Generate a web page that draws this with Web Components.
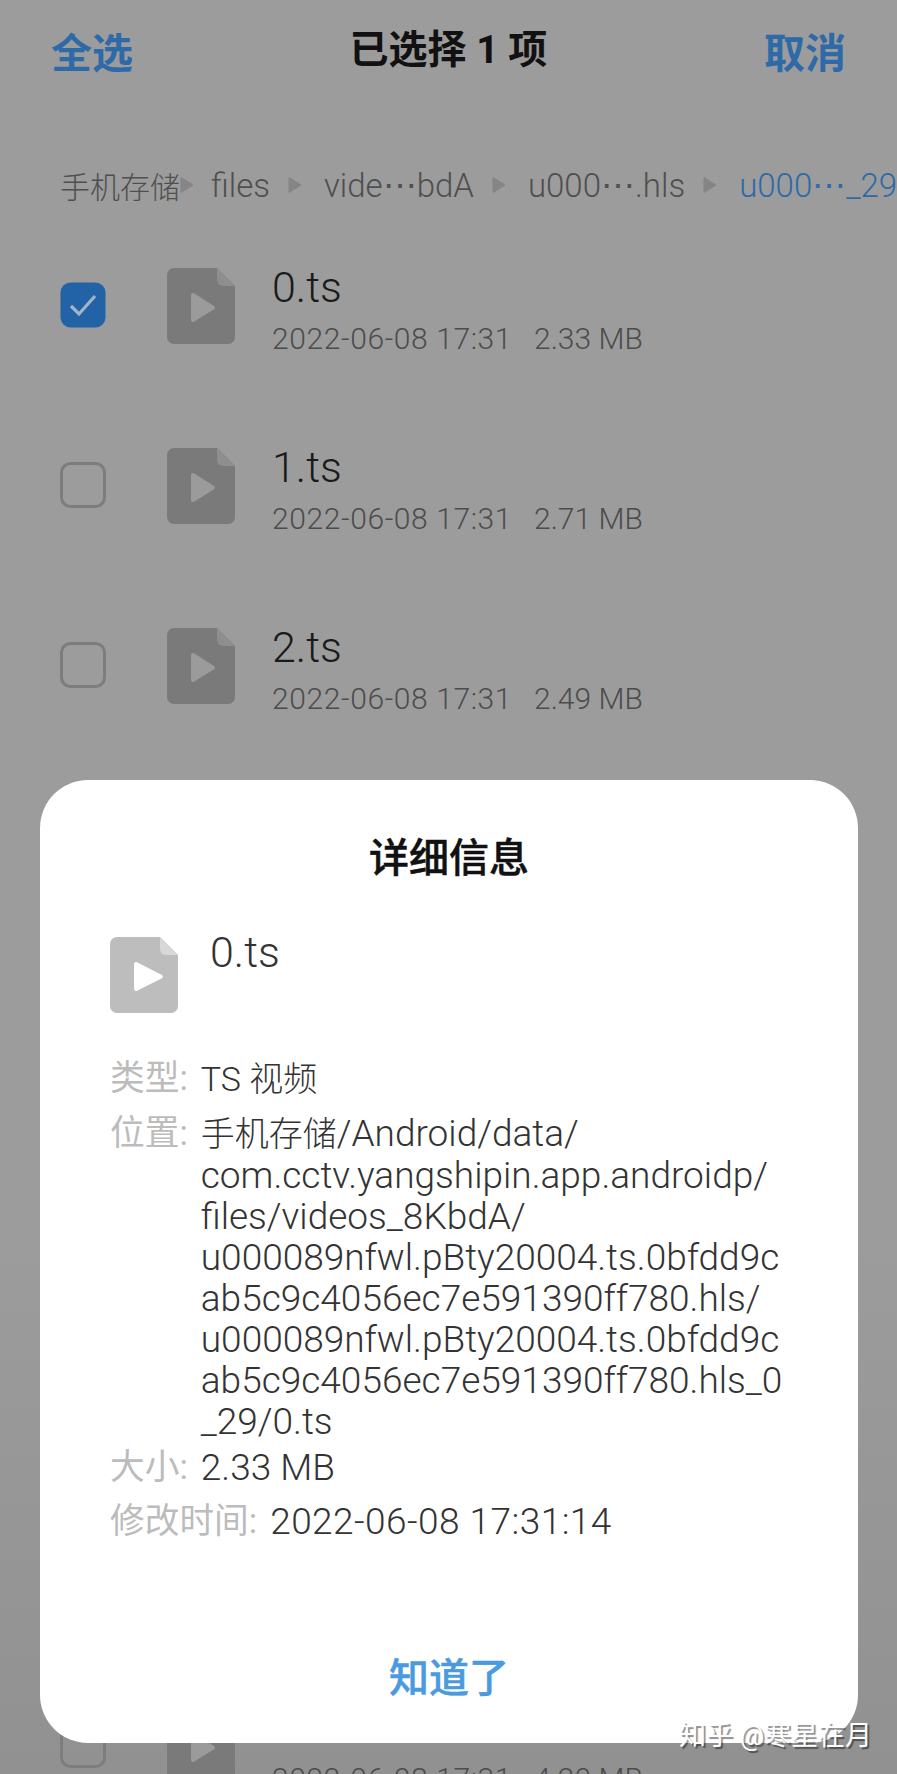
<!DOCTYPE html>
<html>
<head>
<meta charset="utf-8">
<style>
  html, body { margin: 0; padding: 0; background: #9b9b9b; }
  body { width: 897px; height: 1774px; overflow: hidden; position: relative; font-family: Roboto, "Noto Sans CJK SC", sans-serif; background: linear-gradient(#9c9c9c 70%, #919191); }
</style>
</head>
<body>
<file-picker>
  <picker-header></picker-header>
  <crumb-bar></crumb-bar>
  <file-row name="0.ts" meta="2022-06-08 17:31" size="2.33 MB" checked></file-row>
  <file-row name="1.ts" meta="2022-06-08 17:31" size="2.71 MB"></file-row>
  <file-row name="2.ts" meta="2022-06-08 17:31" size="2.49 MB"></file-row>
  <!-- rows 3 to 7 sit fully behind the dialog -->
  <div style="height:900px"></div>
  <file-row name="8.ts" meta="2022-06-08 17:31" size="4.20 MB"></file-row>
</file-picker>
<detail-dialog>
  <detail-row label="类型:"><span>TS 视频</span></detail-row>
  <detail-row label="位置:" tight><span>手机存储</span>/Android/data/<br>com.cctv.yangshipin.app.androidp/<br>files/videos_8KbdA/<br>u000089nfwl.pBty20004.ts.0bfdd9c<br>ab5c9c4056ec7e591390ff780.hls/<br>u000089nfwl.pBty20004.ts.0bfdd9c<br>ab5c9c4056ec7e591390ff780.hls_0<br>_29/0.ts</detail-row>
  <detail-row label="大小:">2.33 MB</detail-row>
  <detail-row label="修改时间:" date>2022-06-08 17:31:14</detail-row>
</detail-dialog>
<water-mark>知乎 @寒星在月</water-mark>

<script>
const FONT = 'Roboto, "Noto Sans CJK SC", sans-serif';

// same page shape for every file icon, only colours and play width change
function fileIcon(body, fold, play, playEnd) {
  return `<svg width="68" height="76" viewBox="0 0 68 76">
    <path d="M7 0H50L68 18V69a7 7 0 0 1-7 7H7a7 7 0 0 1-7-7V7a7 7 0 0 1 7-7Z" fill="${body}"/>
    <path d="M50 0L68 18H56a6 6 0 0 1-6-6Z" fill="${fold}"/>
    <path d="M24 27a2 2 0 0 1 3-1.7L${playEnd - 1} 38a2 2 0 0 1 0 3.2L27 53.7a2 2 0 0 1-3-1.7Z" fill="${play}"/>
  </svg>`;
}

class FilePicker extends HTMLElement {
  connectedCallback() {
    this.attachShadow({ mode: 'open' });
    this.shadowRoot.innerHTML = `
    <style>
      :host { display: block; }
    </style>
    <slot></slot>`;
  }
}

class PickerHeader extends HTMLElement {
  connectedCallback() {
    this.attachShadow({ mode: 'open' });
    this.shadowRoot.innerHTML = `
    <style>
      :host {
        display: flex;
        justify-content: space-between;
        align-items: center;
        height: 100px;
        padding: 0 51px;
        font-family: ${FONT};
        box-sizing: border-box;
      }
      .action { color: #2e6aa8; font-size: 41px; font-weight: 700; }
      .title { color: #111; font-size: 39px; font-weight: 700; padding-bottom: 8px; }
    </style>
    <span class="action">全选</span>
    <span class="title">已选择 1 项</span>
    <span class="action">取消</span>`;
  }
}

class CrumbBar extends HTMLElement {
  connectedCallback() {
    this.attachShadow({ mode: 'open' });
    const dots = '<span class="dots">⋯</span>';
    const parts = ['手机存储', 'files', `vide${dots}bdA`, `u000${dots}.hls`];
    const arrow = '<svg class="arrow" width="14" height="18" viewBox="0 0 14 18"><path d="M1 1.5L13 9L1 16.5Z" fill="#858585" stroke="#858585" stroke-linejoin="round"/></svg>';
    this.shadowRoot.innerHTML = `
    <style>
      :host {
        display: flex;
        align-items: center;
        height: 70px;
        margin-top: 50px;
        margin-bottom: 1px;
        padding-left: 60px;
        overflow: hidden;
        white-space: nowrap;
        font-family: ${FONT};
        font-size: 33px;
        font-weight: 300;
        color: #4f4f4f;
      }
      .part { flex: none; }
      .dots { font-family: "DejaVu Sans", sans-serif; font-size: 34px; }
      .arrow { flex: none; margin: 0 22px 0 18px; }
      .part.first { font-size: 30px; }
      .part.first + .arrow { margin: 0 17px 0 0; }
      .part.last { color: #2e6aa8; }
    </style>
    ${parts.map((p, i) => `<span class="part${i === 0 ? ' first' : ''}">${p}</span>${arrow}`).join('')}
    <span class="part last">u000${dots}_29</span>`;
  }
}

class FileRow extends HTMLElement {
  connectedCallback() {
    this.attachShadow({ mode: 'open' });
    const checked = this.hasAttribute('checked');
    const box = checked
      ? `<svg width="46" height="46" viewBox="0 0 46 46"><rect x="0.5" y="0.5" width="45" height="45" rx="10" fill="#2262a6"/><path d="M11 24l8 8L35 14" fill="none" stroke="#a2b4c8" stroke-width="3.2"/></svg>`
      : `<svg width="46" height="46" viewBox="0 0 46 46"><rect x="1.5" y="1.5" width="43" height="43" rx="9" fill="none" stroke="#7d7d7d" stroke-width="3"/></svg>`;
    this.shadowRoot.innerHTML = `
    <style>
      :host {
        display: flex;
        align-items: center;
        height: 180px;
        padding-left: 60px;
        font-family: ${FONT};
      }
      .box { width: 46px; height: 46px; margin-bottom: 12px; }
      .icon { width: 68px; height: 76px; margin: 0 0 10px 61px; }
      .text { margin: 0 0 4px 37px; }
      .name { font-size: 43px; line-height: 48px; color: #1a1a1a; font-weight: 300; }
      .meta { font-size: 30px; line-height: 34px; margin-top: 11px; color: #4c4c4c; font-weight: 300; white-space: pre; }
      .date { letter-spacing: .6px; }
    </style>
    <div class="box">${box}</div>
    <div class="icon">${fileIcon('#7a7a7a', '#8e8e8e', '#9b9b9b', 48)}</div>
    <div class="text">
      <div class="name">${this.getAttribute('name')}</div>
      <div class="meta"><span class="date">${this.getAttribute('meta')}</span>   ${this.getAttribute('size')}</div>
    </div>`;
  }
}

class DetailDialog extends HTMLElement {
  connectedCallback() {
    this.attachShadow({ mode: 'open' });
    this.shadowRoot.innerHTML = `
    <style>
      :host {
        position: absolute;
        left: 40px;
        top: 780px;
        width: 818px;
        height: 963px;
        box-sizing: border-box;
        padding: 0 70px;
        background: #fff;
        border-radius: 48px;
        display: flex;
        flex-direction: column;
        font-family: ${FONT};
      }
      h2 { margin: 55px 0 0; text-align: center; font-size: 40px; line-height: 48px; font-weight: 500; -webkit-text-stroke: .5px #111; color: #111; }
      .file { display: flex; margin-top: 54px; height: 76px; }
      .name { margin-left: 32px; font-size: 43px; line-height: 48px; margin-top: -9px; color: #333; font-weight: 300; }
      .rows { margin-top: 45px; display: flex; flex-direction: column; }
      .ok { margin-top: auto; margin-bottom: 40px; text-align: center; font-size: 40px; line-height: 48px; font-weight: 500; -webkit-text-stroke: .5px #4a9ae0; color: #4a9ae0; }
    </style>
    <h2>详细信息</h2>
    <div class="file">
      ${fileIcon('#bdbdbd', '#d8d8d8', '#ffffff', 53)}
      <div class="name">0.ts</div>
    </div>
    <div class="rows"><slot></slot></div>
    <div class="ok">知道了</div>`;
  }
}

class DetailRow extends HTMLElement {
  connectedCallback() {
    this.attachShadow({ mode: 'open' });
    this.shadowRoot.innerHTML = `
    <style>
      :host {
        display: flex;
        margin-bottom: 13px;
        font-size: 37px;
        line-height: 41px;
      }
      :host([tight]) { margin-bottom: 5px; }
      :host([date]) .value { letter-spacing: .45px; }
      .label { flex: none; color: #bcbcbc; margin-right: 13px; font-size: 34.7px; }
      .value { color: #333; white-space: nowrap; font-weight: 300; }
      ::slotted(span) { font-size: 34px; font-weight: 300; }
    </style>
    <span class="label">${this.getAttribute('label')}</span>
    <span class="value"><slot></slot></span>`;
  }
}

class WaterMark extends HTMLElement {
  connectedCallback() {
    this.attachShadow({ mode: 'open' });
    this.shadowRoot.innerHTML = `
    <style>
      :host {
        position: absolute;
        right: 25px;
        top: 1718px;
        font-family: ${FONT};
        font-size: 27px;
        line-height: 36px;
        color: #fff;
        text-shadow: 2px 2px 1px rgba(0,0,0,.45);
        white-space: nowrap;
      }
    </style>
    <slot></slot>`;
  }
}

customElements.define('file-picker', FilePicker);
customElements.define('picker-header', PickerHeader);
customElements.define('crumb-bar', CrumbBar);
customElements.define('file-row', FileRow);
customElements.define('detail-dialog', DetailDialog);
customElements.define('detail-row', DetailRow);
customElements.define('water-mark', WaterMark);
</script>
</body>
</html>
